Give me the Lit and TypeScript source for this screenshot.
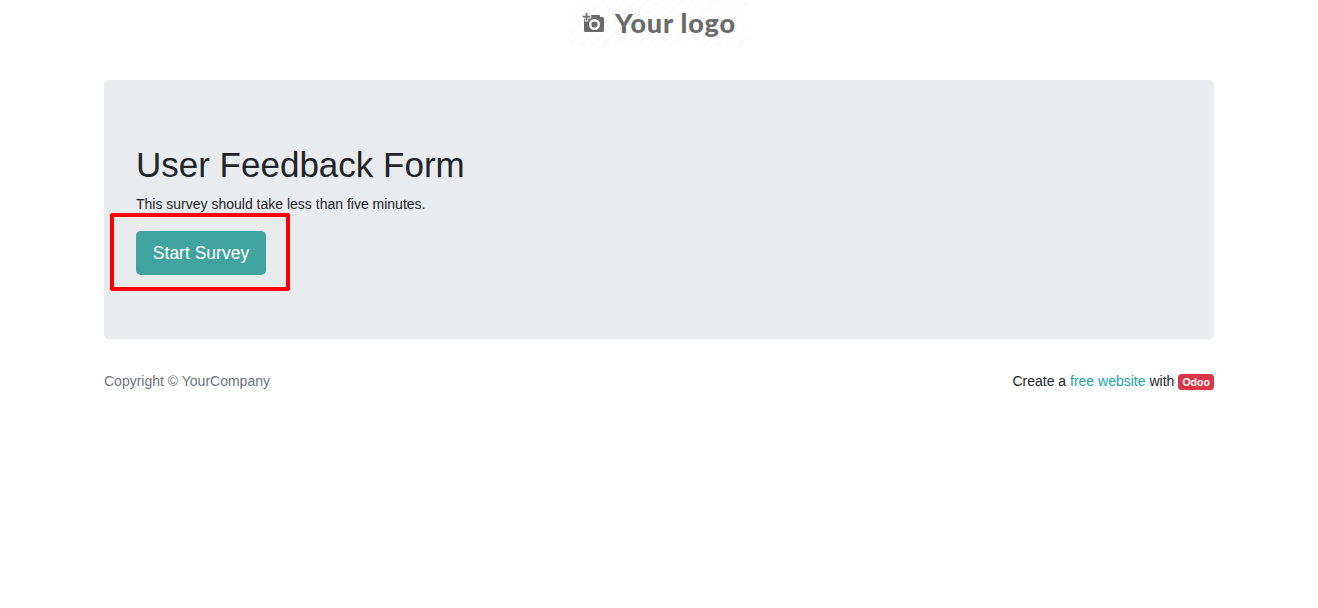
import { LitElement, html, css } from 'lit';
import { customElement } from 'lit/decorators.js';

@customElement('app-root')
export class AppRoot extends LitElement {
  static styles = css`
    :host {
      display: block;
      font-family: 'Liberation Sans', Arial, sans-serif;
      font-size: 14px;
      line-height: 1.5;
      color: #212529;
      background: #fff;
      min-height: 608px;
    }

    .container {
      width: 1110px;
      margin: 0 auto;
    }

    .logo-row {
      display: flex;
      justify-content: center;
      height: 46px;
      margin-bottom: 34px;
    }

    .logo {
      width: 180px;
      height: 46px;
      display: flex;
      align-items: center;
      gap: 9px;
      padding-left: 13px;
      box-sizing: border-box;
      color: #6b6b6b;
      font-family: Lato, sans-serif;
      font-weight: 900;
      font-size: 27px;
      line-height: 46px;
      letter-spacing: 0.8px;
      background: repeating-linear-gradient(
        -45deg,
        #fff 0 7px,
        #f8f8f8 7px 8px
      );
    }

    .logo svg {
      display: block;
      flex: none;
      margin-top: -1px;
    }

    .jumbotron {
      position: relative;
      background: #e9ecef;
      border-radius: 4.8px;
      padding: 64px 32px;
    }

    h1 {
      margin: 0 0 8px;
      font-size: 35px;
      font-weight: 400;
      line-height: 1.2;
    }

    p {
      margin: 0 0 16px;
    }

    .btn {
      display: block;
      width: 130px;
      height: 44px;
      box-sizing: border-box;
      padding: 0;
      border: none;
      border-radius: 4.8px;
      background: #41a39d;
      color: #fff;
      font: inherit;
      font-size: 17.5px;
    }

    .highlight {
      position: absolute;
      left: 6px;
      top: 133px;
      width: 180px;
      height: 78px;
      box-sizing: border-box;
      border: 4px solid #ff0000;
      border-radius: 2px;
    }

    footer {
      display: flex;
      justify-content: space-between;
      align-items: center;
      padding-top: 32px;
    }

    .copyright {
      color: #6c757d;
    }

    .brand a {
      color: #21a5a5;
      text-decoration: none;
    }

    .badge {
      display: inline-block;
      padding: 2.625px 4.2px;
      border-radius: 3.5px;
      background: #dc3545;
      color: #fff;
      font-size: 10.5px;
      font-weight: 700;
      line-height: 1;
      vertical-align: baseline;
    }
  `;

  render() {
    return html`
      <div class="container">
        <div class="logo-row">
          <div class="logo">
            <svg width="24" height="22" viewBox="0 0 24 22" aria-hidden="true">
              <path fill="#6b6b6b" d="M3.500 5H6l1-2h10.500l1 2h2A1.500 1.500 0 0 1 22 6.500v12a1.500 1.500 0 0 1-1.500 1.500h-17A1.500 1.500 0 0 1 2 18.500v-12A1.500 1.500 0 0 1 3.500 5z"/>
              <circle cx="12.500" cy="12.500" r="4.300" fill="none" stroke="#fff" stroke-width="2.400"/>
              <path fill="#fff" d="M2.800 0h3.400v3h3v3.400h-3v3H2.800v-3H0V3h2.800z"/>
              <path fill="#6b6b6b" d="M3.600 1h1.800v2.800h2.800v1.800H5.400v2.800H3.600V5.600H0.800V3.800h2.800z"/>
            </svg>
            <span>Your logo</span>
          </div>
        </div>

        <section class="jumbotron">
          <h1>User Feedback Form</h1>
          <p>This survey should take less than five minutes.</p>
          <button class="btn">Start Survey</button>
          <div class="highlight"></div>
        </section>

        <footer>
          <span class="copyright">Copyright © YourCompany</span>
          <span class="brand">Create a <a href="#">free website</a> with <span class="badge">Odoo</span></span>
        </footer>
      </div>
    `;
  }
}
